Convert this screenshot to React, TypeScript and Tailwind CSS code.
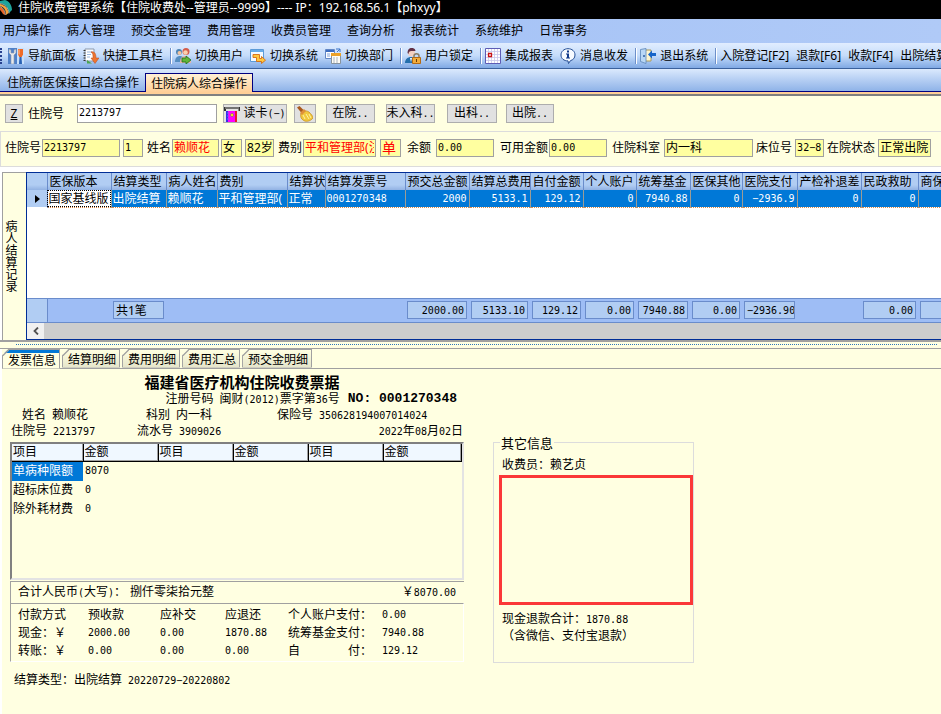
import type { ReactNode } from "react";

const menus = [
  "用户操作",
  "病人管理",
  "预交金管理",
  "费用管理",
  "收费员管理",
  "查询分析",
  "报表统计",
  "系统维护",
  "日常事务",
];

const columns = [
  { title: "医保版本", width: "w-[64px]", value: "国家基线版" },
  { title: "结算类型", width: "w-[55px]", value: "出院结算", total: "共1笔" },
  { title: "病人姓名", width: "w-[51px]", value: "赖顺花" },
  { title: "费别", width: "w-[70px]", value: "平和管理部(" },
  { title: "结算状", width: "w-[38px]", value: "正常" },
  { title: "结算发票号", width: "w-[80px]", value: "0001270348", code: true },
  { title: "预交总金额", width: "w-[64px]", value: "2000", total: "2000.00", numeric: true },
  { title: "结算总费用", width: "w-[61px]", value: "5133.1", total: "5133.10", numeric: true },
  { title: "自付金额", width: "w-[53px]", value: "129.12", total: "129.12", numeric: true },
  { title: "个人账户", width: "w-[53px]", value: "0", total: "0.00", numeric: true },
  { title: "统筹基金", width: "w-[54px]", value: "7940.88", total: "7940.88", numeric: true },
  { title: "医保其他", width: "w-[52px]", value: "0", total: "0.00", numeric: true },
  { title: "医院支付", width: "w-[55px]", value: "−2936.9", total: "−2936.90", numeric: true },
  { title: "产检补退差", width: "w-[64px]", value: "0", numeric: true },
  { title: "民政救助", width: "w-[57px]", value: "0", total: "0.00", numeric: true },
  { title: "商保支付", width: "w-auto", value: "", total: " ", numeric: true },
];

const detailTabs = ["发票信息", "结算明细", "费用明细", "费用汇总", "预交金明细"];

const feeItems = [
  { name: "单病种限额", amount: "8070" },
  { name: "超标床位费", amount: "0" },
  { name: "除外耗材费", amount: "0" },
];

const payments = [
  ["现金：￥", "2000.00", "0.00", "1870.88", "统筹基金支付：", "7940.88"],
  ["转账：￥", "0.00", "0.00", "0.00", "自　　　　付：", "129.12"],
];

const numFont = "font-['DejaVu_Sans_Mono',monospace] text-[10px]";

function Num({ children }: { children: ReactNode }) {
  return <span className={numFont}>{children}</span>;
}

function Icon({ children }: { children: ReactNode }) {
  return (
    <svg viewBox="0 0 16 16" className="size-4 shrink-0" aria-hidden="true">
      {children}
    </svg>
  );
}

const LogoIcon = () => (
  <svg viewBox="0 0 14 16" className="h-4 w-[14px] shrink-0" aria-hidden="true">
    <path d="M0 1l5-1C9 1 12 5 12 10l-3 3C9 8 5 4 0 3z" fill="#1fa39b" />
    <path d="M0 4c5 1 8 4 8.500 9L6 15C6 10 4 7 0 6z" fill="#f6a43c" />
    <path d="M0 7c3 1 5 4 5 8l-2-1C2 12 1 11 0 10z" fill="#e8672a" />
    <path d="M0 3.500C5 4 8.500 8 9 13.500M0 6.500c3 1 5 4 5.500 8.500" stroke="#fff" strokeWidth=".6" fill="none" />
  </svg>
);

const ToolsIcon = () => (
  <Icon>
    <rect width="9" height="16" fill="#4f81c9" />
    <rect x="9" width="7" height="16" fill="#c8e0fa" />
    <path d="M1 1v4l2 2v9h3V7l2-2V1L6 2v3H3V2z" fill="#e8eaec" stroke="#8b98ab" strokeWidth=".6" />
    <path d="M10 1h5v6l-1 1v1h-3V8l-1-1z" fill="#ee6b28" />
    <path d="M11 1.500v5" stroke="#ffc69b" />
    <path d="M11.500 9h2l.5 7h-3z" fill="#2a62b5" />
  </Icon>
);

const NotebookIcon = () => (
  <Icon>
    <path d="M2 1h9v12H2z" fill="#fff" stroke="#8a99ad" />
    <path d="M.5 2.500h2M.5 5h2M.5 7.500h2M.5 10h2M.5 12.500h2" stroke="#333" />
    <path d="M4 4h5M4 6.500h4M4 9h3" stroke="#9ab7df" />
    <path d="M8 4c3-1 5 1 5 6h3l-4 5.500L8 10h2c0-3 0-5-2-6z" fill="#ee7430" stroke="#b9481a" strokeWidth=".5" />
    <path d="M4 12l5 3.500H4z" fill="#4ba64f" />
  </Icon>
);

const SwitchUserIcon = () => (
  <Icon>
    <circle cx="4" cy="4" r="3" fill="#4d83b3" />
    <circle cx="11" cy="3.500" r="3.500" fill="#d45d4b" />
    <circle cx="4.500" cy="5" r="2" fill="#f3c5a0" />
    <circle cx="10.500" cy="4.500" r="2.300" fill="#fad0ac" />
    <path d="M0 14c0-4 2-6 5-6s4 2 4 6z" fill="#568ec1" />
    <path d="M5 15c0-5 2-7 5-7s5 2 6 6v1z" fill="#e9b3a4" />
    <path d="M7 10h4V8l5 4-5 4v-2H7z" fill="#61b637" stroke="#1c7120" strokeWidth=".8" />
  </Icon>
);

const SwitchSystemIcon = () => (
  <Icon>
    <path d="M.5 1.500h13v12H.5z" fill="#f4faff" stroke="#5c9bd8" />
    <path d="M1 2h12v2H1z" fill="#68adea" />
    <path d="M3 6.500h6.500v4h2V8.500l4 3.700-4 3.300V13.500H6.500V9.500H3z" fill="#ffc83e" stroke="#d76c12" strokeWidth=".9" />
  </Icon>
);

const SwitchDeptIcon = () => (
  <Icon>
    <path d="M.5 1.500h9v9h-9z" fill="#fff" stroke="#6287c5" />
    <path d="M1 2h8v2H1z" fill="#3c6dc0" />
    <path d="M2 6h3M2 8h3" stroke="#80a2db" />
    <path d="M6.500 5.500h9v10h-9z" fill="#fffdf5" stroke="#87939d" />
    <path d="M6 5h10v3H6z" fill="#eda227" />
    <path d="M8 10h6M8 12h6M8 14h6" stroke="#a9b6c3" strokeDasharray="2 1" />
    <path d="M11 1h4v3M15 1l-3 3" stroke="#3d74c8" fill="none" />
  </Icon>
);

const UserLockIcon = () => (
  <Icon>
    <path d="M0 15c0-4 3-6 6-6s4 2 4 6z" fill="#246fac" />
    <circle cx="6.500" cy="5" r="3.500" fill="#f2cfc2" />
    <path d="M2.500 5c0-7 8-6 8-2l-3 0C5 3 4 3 3.500 6z" fill="#623045" />
    <path d="M5 10l1 4 1-4z" fill="#fff" />
    <path d="M9 10V8c0-3 5-3 5 0v2" fill="none" stroke="#8a7c65" strokeWidth="1.500" />
    <path d="M7.500 9.500h8v6h-8z" fill="#f2ac3c" stroke="#b46a14" />
    <path d="M11 11h1v3h-1z" fill="#6b3c07" />
  </Icon>
);

const ReportIcon = () => (
  <Icon>
    <path d="M.5.500h15v15H.5z" fill="#fff" stroke="#5d5cb5" />
    <path d="M1 3.500h14M1 6.500h14M1 9.500h14M1 12.500h14M3.500 1v14M6.500 1v14M9.500 1v14M12.500 1v14" stroke="#c8c6ea" strokeWidth=".8" />
    <path d="M3.500 5.500h3v3h-3z" fill="#fff" stroke="#c91414" strokeWidth="1.300" />
  </Icon>
);

const InfoIcon = () => (
  <Icon>
    <path d="M8 .7c4 0 7 2.500 7 6.300 0 3-2 5-4.500 5.600L8.500 15.500 8 12.900C4 13 1 10.500 1 7S4 .7 8 .7z" fill="#f7fbff" stroke="#234d94" />
    <path d="M7 2.500h2v2H7zM6 5.500h3v4h1v1H6v-1h1v-3H6z" fill="#123b8a" />
  </Icon>
);

const ExitIcon = () => (
  <Icon>
    <path d="M3 2h8v11H3z" fill="#fff5cf" stroke="#a99a5d" />
    <path d="M.5 1.500L6 .500v15l-5.500-2z" fill="#b9d7f5" stroke="#5c85b7" strokeWidth=".8" />
    <circle cx="4" cy="8" r="1" fill="#315f9e" />
    <path d="M8 6.500l4-4v2.500h4v3h-4v2.500z" fill="#1765c9" />
  </Icon>
);

const CardReaderIcon = () => (
  <Icon>
    <path d="M0 1h16v4h-1.500V3H2v2H0z" fill="#333" />
    <path d="M1 2h14" stroke="#d6d6d6" strokeWidth=".8" />
    <path d="M2 5h6v11H2z" fill="#3530e8" />
    <path d="M4 5h8v11H4z" fill="#f0f" />
    <path d="M11 5h2v11h-2z" fill="#e61b2b" />
    <path d="M3 7h2M3 10h2M3 13h2" stroke="#66f" />
    <path d="M8 7l2 2-2 2-2-2z" fill="#f4d52b" stroke="#666" strokeWidth=".5" />
  </Icon>
);

const BroomIcon = () => (
  <Icon>
    <path d="M0 1.500L2.500 0l5 5-3 2z" fill="#a95b1e" />
    <path d="M4 7c2-2 5-3 8-1 2 2 4 4 4 6-3 4-8 4-10 2-2-1-3-4-2-7z" fill="#f1c83d" stroke="#c38b17" strokeWidth=".7" />
    <path d="M6 9l2 4M9 8l3 5M12 8l2 4" stroke="#fff3a1" />
    <path d="M3 7l4-4 2 2-4 4z" fill="#de9038" />
  </Icon>
);

function ToolButton({ icon, children }: { icon?: ReactNode; children: ReactNode }) {
  return (
    <button type="button" className="mr-[7px] flex shrink-0 items-center gap-1 whitespace-nowrap">
      {icon}
      {children}
    </button>
  );
}

const Separator = () => (
  <span className="mr-[3px] h-4 w-[2px] shrink-0 border-r border-white bg-[#6d8fc9]" />
);

function GrayButton({ className, label, children }: { className: string; label?: string; children: ReactNode }) {
  return (
    <button
      type="button"
      aria-label={label}
      className={`flex h-[19px] shrink-0 items-center justify-center gap-[3px] border border-[#adadad] bg-[#e1e1e1] whitespace-nowrap ${className}`}
    >
      {children}
    </button>
  );
}

type FieldProps = {
  id: string;
  label?: string;
  name?: string;
  value: string;
  width: string;
  gap: string;
  numeric?: boolean;
  red?: boolean;
};

function Field({ id, label, name, value, width, gap, numeric, red }: FieldProps) {
  return (
    <div className={`flex shrink-0 items-center ${gap}`}>
      {label && (
        <label htmlFor={id} className="mr-px whitespace-nowrap">
          {label}
        </label>
      )}
      <input
        id={id}
        aria-label={name}
        defaultValue={value}
        className={`h-[18px] border border-[#a0a0a0] bg-[#ffffa0] px-px pb-[2px] ${width} ${numeric ? numFont : ""} ${red ? "text-[#ff0000]" : ""}`}
      />
    </div>
  );
}

function SettlementGrid() {
  return (
    <div className="min-w-0 flex-1 overflow-hidden border border-r-0 border-[#002d96] bg-white">
      <table className="w-full min-w-[960px] table-fixed border-collapse">
        <thead>
          <tr className="h-[17px] bg-linear-to-b from-[#b1cdf3] from-70% to-[#92b2e3]">
            <th className="w-[20px] border-r border-[#6a8ccb]" />
            {columns.map((col) => (
              <th
                key={col.title}
                className={`overflow-hidden border-r border-[#6a8ccb] p-0 pl-[2px] text-left leading-[17px] font-normal whitespace-nowrap ${col.width}`}
              >
                {col.title}
              </th>
            ))}
          </tr>
        </thead>
        <tbody>
          <tr className="h-[17px] bg-[#0078d7] text-white">
            <td className="border-r border-[#6a8ccb] bg-[#b1cdf3] p-0">
              <svg viewBox="0 0 5 8" className="ml-2 h-2 w-[5px]" aria-hidden="true">
                <path d="M0 0l5 4-5 4z" fill="#000" />
              </svg>
            </td>
            {columns.map((col, i) => (
              <td
                key={col.title}
                className={`overflow-hidden border-r border-b border-r-[#9c9c94] border-b-[#d98a4a] p-0 pt-px leading-[15px] whitespace-nowrap [border-bottom-style:dotted] ${
                  i === 0 ? "bg-white text-black outline-1 -outline-offset-1 outline-black outline-dotted" : ""
                } ${col.numeric || col.code ? numFont : ""} ${col.numeric ? "pr-[2px] text-right" : "pl-px"}`}
              >
                {col.value}
              </td>
            ))}
          </tr>
          <tr className="h-[91px]">
            <td colSpan={columns.length + 1} />
          </tr>
        </tbody>
        <tfoot>
          <tr className="h-[24px] border-y border-[#6a8ccb] bg-[#9ebdf5]">
            <td className="border-r border-[#6a8ccb] bg-[#b1cdf3]" />
            {columns.map((col) => (
              <td key={col.title} className="p-0 pr-[2px] pl-[2px]">
                {col.total && (
                  <div
                    className={`h-[18px] overflow-hidden border border-[#6a8ccb] bg-[#b1cdf3] px-[2px] leading-[17px] whitespace-nowrap ${
                      col.numeric ? `text-right ${numFont}` : ""
                    }`}
                  >
                    {col.total}
                  </div>
                )}
              </td>
            ))}
          </tr>
        </tfoot>
      </table>
      <div className="flex h-4 bg-[#cdcdcd]">
        <button type="button" aria-label="向左滚动" className="flex w-[17px] items-center justify-center bg-[#f0f0f0]">
          <svg viewBox="0 0 6 8" className="h-2 w-[6px]" fill="none" stroke="#505050" strokeWidth="1.800" aria-hidden="true">
            <path d="M5 .500L1.500 4 5 7.500" />
          </svg>
        </button>
      </div>
    </div>
  );
}

function DetailTabs() {
  return (
    <div role="tablist" className="flex h-[19px] items-end gap-[2px] border-b border-[#a0a0a0]">
      {detailTabs.map((tab, i) => (
        <button
          key={tab}
          type="button"
          role="tab"
          aria-selected={i === 0}
          className={`relative h-[19px] border border-[#a0a0a0] pt-[3px] pr-[3px] pl-[5px] leading-[14px] [clip-path:polygon(7px_0,100%_0,100%_100%,0_100%,0_7px)] ${
            i === 0
              ? "-mb-px h-[20px] border-b-0 bg-[#ffffe1] shadow-[inset_0_3px_#0078d7]"
              : "bg-linear-to-b from-[#ffffe1] to-[#e6e6cb]"
          }`}
        >
          <svg viewBox="0 0 7 7" className="absolute -top-px -left-px size-[7px]" aria-hidden="true">
            <path d="M0 7L7 0" stroke="#a0a0a0" strokeWidth="2" />
          </svg>
          {tab}
        </button>
      ))}
    </div>
  );
}

function Invoice() {
  return (
    <section className="w-[454px] shrink-0 pt-1">
      <h1 className="pl-[10px] text-center text-[15px] leading-[18px] font-bold">福建省医疗机构住院收费票据</h1>
      <div className="flex h-[17px] items-center justify-end gap-2 pr-[7px]">
        <span>
          注册号码&ensp;闽财<Num>(2012)</Num>票字第<Num>36</Num>号
        </span>
        <strong className="font-['Liberation_Mono'] text-[13px]">NO: 0001270348</strong>
      </div>
      <div className="grid h-[14px] grid-cols-[124px_131px_1fr] items-center pl-[12px] leading-[14px]">
        <span>姓名&ensp;赖顺花</span>
        <span>科别&ensp;内一科</span>
        <span>
          保险号&ensp;<Num>350628194007014024</Num>
        </span>
      </div>
      <div className="grid h-[20px] grid-cols-[126px_1fr_auto] items-center pr-px pl-px">
        <span>
          住院号&ensp;<Num>2213797</Num>
        </span>
        <span>
          流水号&ensp;<Num>3909026</Num>
        </span>
        <span>
          <Num>2022</Num>年<Num>08</Num>月<Num>02</Num>日
        </span>
      </div>

      <div className="h-[138px] border-2 border-t-[#808080] border-r-[#e3e3e3] border-b-[#e3e3e3] border-l-[#808080]">
        <table className="w-full table-fixed border-collapse">
          <thead>
            <tr className="h-[18px] bg-[#f0f8ff]">
              {["项目", "金额", "项目", "金额", "项目", "金额"].map((title, i) => (
                <th
                  key={i}
                  className={`border-r border-b border-black p-0 pl-px text-left leading-4 font-normal shadow-[inset_-1px_-1px_#a0a0a0] ${
                    i === 0 ? "w-[71px]" : i === 5 ? "w-auto" : "w-[75px]"
                  }`}
                >
                  {title}
                </th>
              ))}
            </tr>
          </thead>
          <tbody>
            {feeItems.map((item, i) => (
              <tr key={item.name} className="h-[19px]">
                <td className={`p-0 pl-px leading-[18px] whitespace-nowrap ${i === 0 ? "bg-[#0078d7] text-white" : ""}`}>
                  {item.name}
                </td>
                <td className={`p-0 pl-[2px] ${numFont}`}>{item.amount}</td>
                <td colSpan={4} />
              </tr>
            ))}
          </tbody>
        </table>
      </div>

      <div className="mt-px flex h-[22px] items-center border-t border-l border-[#a0a0a0] pr-[8px] pl-[7px]">
        <span className="w-[112px]">
          合计人民币<Num>(</Num>大写<Num>)</Num>：
        </span>
        <span>捌仟零柒拾元整</span>
        <span className="ml-auto">
          ￥<Num>8070.00</Num>
        </span>
      </div>
      <div className="border border-t-[#a0a0a0] border-r-white border-b-white border-l-[#a0a0a0] pt-[2px] pb-px pl-[7px]">
        <table className="w-full table-fixed border-collapse">
          <thead>
            <tr className="h-[18px] text-left">
              <th className="w-[70px] p-0 font-normal">付款方式</th>
              <th className="w-[72px] p-0 font-normal">预收款</th>
              <th className="w-[65px] p-0 font-normal">应补交</th>
              <th className="w-[63px] p-0 font-normal">应退还</th>
              <th className="w-[94px] p-0 font-normal">个人账户支付：</th>
              <td className={`p-0 ${numFont}`}>0.00</td>
            </tr>
          </thead>
          <tbody>
            {payments.map((row) => (
              <tr key={row[0]} className="h-[18px]">
                {row.map((cell, i) => (
                  <td key={i} className={`p-0 whitespace-nowrap ${i % 4 === 0 ? "" : numFont}`}>
                    {cell}
                  </td>
                ))}
              </tr>
            ))}
          </tbody>
        </table>
      </div>
      <p className="pt-[10px] pl-1">
        结算类型：出院结算&ensp;<Num>20220729−20220802</Num>
      </p>
    </section>
  );
}

export default function App() {
  return (
    <div className="flex min-h-screen flex-col overflow-hidden bg-[#ffffe1] font-['Noto_Sans','Noto_Sans_CJK_SC',sans-serif] text-[12px] leading-4 text-black">
      <header className="flex h-[19px] items-center gap-1 bg-black pb-[3px] whitespace-nowrap text-white">
        <LogoIcon />
        住院收费管理系统【住院收费处--管理员--9999】---- IP：192.168.56.1【phxyy】
      </header>

      <nav className="flex h-6 items-center gap-4 bg-linear-to-r from-[#9ebef5] to-[#b0caf7] px-[3px]">
        {menus.map((menu) => (
          <button key={menu} type="button" className="whitespace-nowrap">
            {menu}
          </button>
        ))}
      </nav>

      <div className="flex h-[26px] items-center overflow-hidden border-b border-[#3b619c] bg-linear-to-b from-[#e1edff] via-[#c5dcfa] to-[#80a9e4]">
        <span className="mr-[6px] h-4 w-[2px] shrink-0 border-r-2 border-dotted border-[#27418f]" />
        <ToolButton icon={<ToolsIcon />}>导航面板</ToolButton>
        <ToolButton icon={<NotebookIcon />}>快捷工具栏</ToolButton>
        <Separator />
        <ToolButton icon={<SwitchUserIcon />}>切换用户</ToolButton>
        <ToolButton icon={<SwitchSystemIcon />}>切换系统</ToolButton>
        <ToolButton icon={<SwitchDeptIcon />}>切换部门</ToolButton>
        <Separator />
        <ToolButton icon={<UserLockIcon />}>用户锁定</ToolButton>
        <Separator />
        <ToolButton icon={<ReportIcon />}>集成报表</ToolButton>
        <ToolButton icon={<InfoIcon />}>消息收发</ToolButton>
        <Separator />
        <ToolButton icon={<ExitIcon />}>退出系统</ToolButton>
        <Separator />
        <ToolButton>入院登记[F2]</ToolButton>
        <ToolButton>退款[F6]</ToolButton>
        <ToolButton>收款[F4]</ToolButton>
        <ToolButton>出院结算[F8]</ToolButton>
      </div>

      <div className="border-b-2 border-[#808080] bg-[#ffcf97] pb-[2px]">
        <div role="tablist" className="flex h-[23px] items-end border-b border-[#000080] bg-linear-to-b from-[#dbe9fd] to-[#8fb3e8]">
          <button type="button" role="tab" aria-selected={false} className="h-[18px] pt-[2px] pr-[6px] pl-[7px]">
            住院新医保接口综合操作
          </button>
          <button
            type="button"
            role="tab"
            aria-selected
            className="-mb-px h-[19px] border border-b-0 border-[#000080] bg-linear-to-b from-[#fff1d6] to-[#ffcf97] px-[5px] pt-px"
          >
            住院病人综合操作
          </button>
        </div>
      </div>

      <form className="flex h-[35px] items-center pl-[5px]">
        <GrayButton className="w-[18px] underline">Z</GrayButton>
        <label htmlFor="admission-no" className="mr-[13px] ml-[5px]">
          住院号
        </label>
        <input
          id="admission-no"
          defaultValue="2213797"
          className={`mr-[6px] h-[19px] w-[140px] border border-[#a0a0a0] bg-white px-px pb-[2px] ${numFont}`}
        />
        <GrayButton className="mr-[7px] w-[64px]">
          <CardReaderIcon />
          <span>
            读卡<Num>(−)</Num>
          </span>
        </GrayButton>
        <GrayButton className="mr-[10px] w-[22px]" label="清空">
          <BroomIcon />
        </GrayButton>
        <GrayButton className="mr-[11px] w-[49px]">
          <span>在院<Num>..</Num></span>
        </GrayButton>
        <GrayButton className="mr-[12px] w-[49px]">
          <span>未入科<Num>..</Num></span>
        </GrayButton>
        <GrayButton className="mr-[9px] w-[50px]">
          <span>出科<Num>..</Num></span>
        </GrayButton>
        <GrayButton className="w-[48px]">
          <span>出院<Num>..</Num></span>
        </GrayButton>
      </form>

      <div className="flex h-[36px] items-center overflow-hidden border border-r-0 border-[#dcdcdc] pb-[2px] pl-1">
        <Field id="f-no" label="住院号" value="2213797" width="w-[78px]" gap="" numeric />
        <Field id="f-times" name="住院次数" value="1" width="w-[20px]" gap="ml-[3px]" numeric />
        <Field id="f-name" label="姓名" value="赖顺花" width="w-[47px]" gap="ml-1" red />
        <Field id="f-sex" name="性别" value="女" width="w-[21px]" gap="ml-[2px]" />
        <Field id="f-age" name="年龄" value="82岁" width="w-[29px]" gap="ml-[3px]" />
        <Field id="f-type" label="费别" value="平和管理部(注" width="w-[73px]" gap="ml-1" red />
        <Field id="f-single" name="单病种" value="单" width="w-[21px] text-[14px]" gap="ml-1" red />
        <Field id="f-balance" label="余额" value="0.00" width="ml-1 w-[58px]" gap="ml-[6px]" numeric />
        <Field id="f-usable" label="可用金额" value="0.00" width="w-[58px]" gap="ml-[6px]" numeric />
        <Field id="f-dept" label="住院科室" value="内一科" width="ml-[3px] w-[89px]" gap="ml-[5px]" />
        <Field id="f-bed" label="床位号" value="32−81" width="ml-[2px] w-[29px]" gap="ml-[3px]" numeric />
        <Field id="f-state" label="在院状态" value="正常出院" width="ml-[2px] w-[53px]" gap="ml-[3px]" />
      </div>

      <div className="flex border-b-2 border-[#a0a0a0] bg-white pt-[5px] pl-[2px]">
        <div className="flex w-6 shrink-0 justify-center border-t border-l border-[#a0a0a0] bg-[#ffffe1] pr-[6px]">
          <span className="mt-[48px] w-3 leading-3">病人结算记录</span>
        </div>
        <SettlementGrid />
      </div>

      <div className="flex h-[7px] items-center border-b border-[#a0a0a0] pr-1 pl-4">
        <span className="w-full border-t border-dotted border-[#2a76b8]" />
      </div>

      <main className="flex flex-1 flex-col border-l-2 border-white pt-px">
        <DetailTabs />
        <div className="flex pl-[8px]">
          <Invoice />
          <fieldset className="mt-[66px] ml-[29px] h-[228px] w-[201px] border border-[#dcdcdc] pl-[5px]">
            <legend className="ml-px px-px text-[13px]">其它信息</legend>
            <p className="pt-[6px] pl-[3px]">收费员：赖艺贞</p>
            <div className="mt-[2px] h-[130px] border-[3px] border-[#fb3838]" />
            <div className="pt-[6px] pl-[3px]">
              <p>
                现金退款合计：<Num>1870.88</Num>
              </p>
              <p>（含微信、支付宝退款）</p>
            </div>
          </fieldset>
        </div>
      </main>
    </div>
  );
}
